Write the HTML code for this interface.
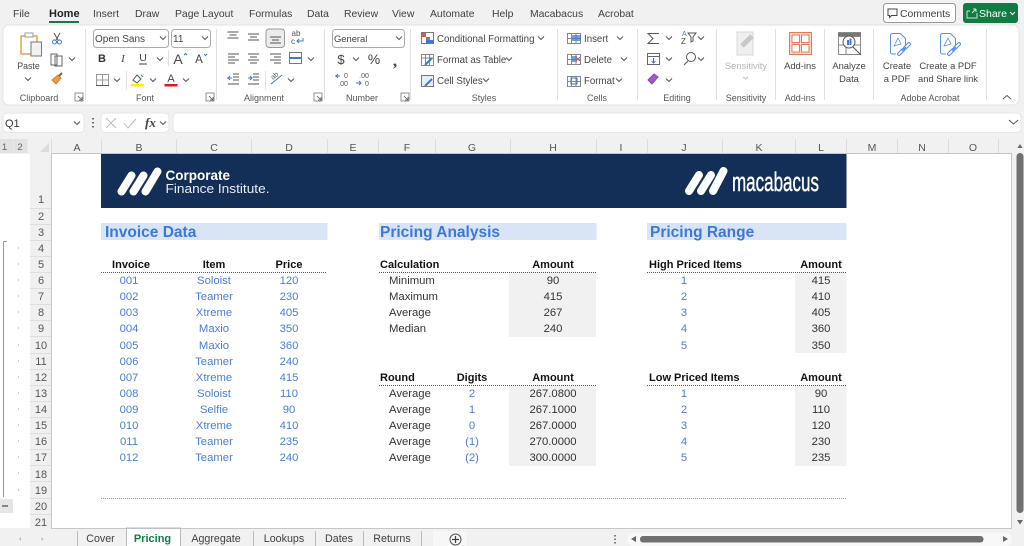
<!DOCTYPE html>
<html><head><meta charset="utf-8"><style>
html,body{margin:0;padding:0;width:1024px;height:546px;overflow:hidden;background:#f1f1f1}
svg{display:block;font-family:"Liberation Sans",sans-serif}
.m{font-size:10.4px;fill:#3f3f3f}
.tb{font-size:10.7px;fill:#3f3f3f}
.u{font-size:9.7px;fill:#444}
.b{font-size:9.4px;fill:#444}
.l{font-size:9px;fill:#555}
.c{font-size:10.5px;fill:#555}
.r{font-size:11px;fill:#555}
.h{font-size:11px;font-weight:bold;fill:#111}
.d{font-size:11.3px;fill:#4a7dd6}
.k{font-size:11.3px;fill:#333}
.t{font-size:15.500px;font-weight:bold;fill:#3b78d9}
</style></head><body>
<svg width="1024" height="546" viewBox="0 0 1024 546" xmlns="http://www.w3.org/2000/svg">
<defs>
<path id="cv" d="M-3-1.500L0 1.500L3-1.500" fill="none" stroke="#555" stroke-width="1"/>
<g id="la"><rect x="-4" y="-4" width="8" height="8" fill="none" stroke="#777" stroke-width=".8"/><path d="M-1-1L3 3M0 3H3V0" fill="none" stroke="#555" stroke-width=".8"/></g>
</defs>
<!-- top menu -->
<g class="m">
<text x="13" y="17">File</text><text x="49" y="17" font-weight="bold" style="fill:#222;font-size:11px">Home</text><text x="93" y="17">Insert</text><text x="135" y="17">Draw</text><text x="175" y="17">Page Layout</text><text x="249" y="17">Formulas</text><text x="307" y="17">Data</text><text x="344" y="17">Review</text><text x="392" y="17">View</text><text x="430" y="17">Automate</text><text x="492" y="17">Help</text><text x="530" y="17">Macabacus</text><text x="598" y="17">Acrobat</text>
</g>
<rect x="49" y="21" width="30" height="2" fill="#107c41"/>
<!-- comments / share -->
<rect x="883.500" y="3.500" width="72" height="19" rx="3" fill="#fff" stroke="#999"/>
<path d="M888 9h9v6.500h-5.500l-2 2v-2h-1.500z" fill="none" stroke="#444"/>
<text x="900" y="17" class="m">Comments</text>
<rect x="963" y="3" width="55" height="20" rx="3" fill="#107c41"/>
<path d="M967 11h3M967 11v7h10v-5M972 13l4-4m0 0h-3m3 0v3" fill="none" stroke="#cfe6d8"/>
<text x="979" y="17" font-size="10.500" fill="#fff">Share</text>
<path d="M1010 12l2.500 2.500l2.500-2.500" fill="none" stroke="#fff"/>
<!-- ribbon -->
<rect x="3" y="25" width="1016" height="80" rx="6" fill="#fff" stroke="#e3e3e3"/>
<g stroke="#e1e1e1"><path d="M85.500 29v71M216.500 29v71M324.500 29v71M410.500 29v71M557.500 29v71M637.500 29v71M716.500 29v71M775.500 29v71M824.500 29v71M873.500 29v71M986.500 29v71"/><path d="M168.500 50v16M126.500 71v19M265.500 71v19"/></g>
<!-- clipboard -->
<path d="M21 36h16v18H21z" fill="#fff" stroke="#e8a33d" stroke-width="1.500"/>
<rect x="25" y="33" width="8" height="4" fill="#fff" stroke="#999"/>
<rect x="31" y="42" width="10.500" height="14" fill="#f2f2f2" stroke="#777"/>
<text x="28.500" y="69" font-size="8.800" fill="#444" text-anchor="middle">Paste</text>
<use href="#cv" x="28" y="79"/>
<path d="M54 33l4 7M60 33l-4 7" stroke="#555" fill="none"/><circle cx="54.500" cy="42" r="2" fill="none" stroke="#3b78d9"/><circle cx="59.500" cy="42" r="2" fill="none" stroke="#3b78d9"/>
<path d="M51 54h6v11h-6zM55 56h7v10h-7z" fill="#fff" stroke="#666"/>
<use href="#cv" x="72" y="59"/>
<path d="M52 80l6-5l3 3l-5 6z" fill="#ee9a4d" stroke="#d9802c"/><path d="M59 76l3-3" stroke="#666" stroke-width="2"/>
<!-- font -->
<rect x="93.500" y="29.500" width="75" height="18" rx="3" fill="#fff" stroke="#aaa"/>
<text x="95" y="42" font-size="10" fill="#444">Open Sans</text><use href="#cv" x="163" y="38"/>
<rect x="171.500" y="29.500" width="39" height="18" rx="3" fill="#fff" stroke="#aaa"/>
<text x="173" y="42" font-size="10" fill="#444">11</text><use href="#cv" x="205" y="38"/>
<text x="102" y="62" font-size="11" font-weight="bold" fill="#333" text-anchor="middle">B</text>
<text x="123" y="62" font-size="11" font-style="italic" fill="#444" text-anchor="middle" font-family="Liberation Serif">I</text>
<text x="143" y="61" font-size="10.500" fill="#444" text-anchor="middle">U</text><path d="M139 64h8" stroke="#444"/>
<use href="#cv" x="160" y="59"/>
<text x="178" y="64" font-size="14" fill="#444" text-anchor="middle">A</text><path d="M184 55l1.500-1.500l1.500 1.500" fill="none" stroke="#3b78d9"/>
<text x="199" y="63" font-size="11.500" fill="#444" text-anchor="middle">A</text><path d="M204 54l1.500 1.500l1.500-1.500" fill="none" stroke="#3b78d9"/>
<path d="M96.500 74.500h12v11h-12zM102.500 74.500v11M96.500 80h12" fill="none" stroke="#999"/><path d="M96 85.500h13" stroke="#555"/>
<use href="#cv" x="117" y="80"/>
<path d="M133 80l4-5l4 4l-4 4z" fill="#fff" stroke="#555"/><path d="M141 75l2 2" stroke="#3b78d9"/><rect x="131" y="84" width="13" height="2.500" fill="#ffee00"/>
<use href="#cv" x="153" y="80"/>
<text x="171" y="82" font-size="11" fill="#444" text-anchor="middle">A</text><rect x="164.500" y="84" width="13" height="2.500" fill="#e8141c"/>
<use href="#cv" x="186" y="80"/>
<!-- alignment -->
<rect x="266" y="29" width="18.500" height="18.500" rx="3" fill="#ececec" stroke="#999"/>
<g stroke="#555" fill="none">
<path d="M227.500 32h11M229.500 35h7M227.500 38h11"/>
<path d="M248 34h11M250 37h7M248 40h11"/>
<path d="M270 37h11M272 40h7M270 43h11"/>
<path d="M228 54h11M228 57h7M228 60h11M228 63h7"/>
<path d="M248 54h11M250 57h7M248 60h11M250 63h7"/>
<path d="M270 54h11M274 57h7M270 60h11M274 63h7"/>
<path d="M233 74h6M233 77h6M233 80h6M228 84h11"/>
<path d="M253 74h6M253 77h6M253 80h6M248 84h11"/>
</g>
<path d="M227 78h5m-2-2l-2 2l2 2" fill="none" stroke="#3b78d9"/><path d="M248 78h4m-2-2l2 2l-2 2" fill="none" stroke="#3b78d9"/>
<text x="296" y="36" font-size="8" fill="#555" text-anchor="middle">ab</text><text x="293" y="44" font-size="8" fill="#555" text-anchor="middle">c</text><path d="M303 38v3h-6m2-2l-2 2l2 2" fill="none" stroke="#3b78d9"/>
<rect x="289.500" y="52.500" width="12" height="11" fill="#fff" stroke="#777"/><path d="M290 58h11" stroke="#3b78d9" stroke-width="2"/>
<use href="#cv" x="311" y="59"/>
<path d="M271 84l11-9" stroke="#3b78d9"/><text x="273" y="80" font-size="7" fill="#555" transform="rotate(-40 273 80)">ab</text>
<use href="#cv" x="291" y="80"/>
<use href="#la" x="79" y="97"/><use href="#la" x="210" y="97"/><use href="#la" x="318" y="97"/><use href="#la" x="405" y="97"/>
<!-- number -->
<rect x="332.500" y="29.500" width="72" height="18" rx="3" fill="#fff" stroke="#aaa"/>
<text x="334" y="42" font-size="9.400" fill="#444">General</text><use href="#cv" x="399" y="38"/>
<text x="341" y="64" font-size="13" fill="#444" text-anchor="middle">$</text><use href="#cv" x="356" y="59"/>
<text x="374" y="64" font-size="14" fill="#444" text-anchor="middle">%</text>
<text x="395" y="66" font-size="17" font-weight="bold" fill="#444" text-anchor="middle" font-family="Liberation Serif">,</text>
<text x="346" y="78" font-size="7" fill="#555" text-anchor="middle">0</text><text x="343" y="86" font-size="7" fill="#555" text-anchor="middle">.00</text><path d="M335 76h5m-2-2l-2 2l2 2" fill="none" stroke="#3b78d9"/>
<text x="364" y="78" font-size="7" fill="#555" text-anchor="middle">.00</text><text x="367" y="86" font-size="7" fill="#555" text-anchor="middle">0</text><path d="M356 83h5m-2-2l2 2l-2 2" fill="none" stroke="#3b78d9"/>
<!-- styles -->
<rect x="421.500" y="32.500" width="12" height="11" fill="#fff" stroke="#777"/><rect x="422" y="33" width="4" height="4" fill="#e0564a"/><rect x="426" y="37" width="4" height="3" fill="#e0564a"/><rect x="426" y="40" width="7" height="3" fill="#3b78d9"/>
<path d="M421.500 54.500h12v11h-12zM421.500 58h12M425.500 54.500v11M429.500 54.500v11" fill="none" stroke="#888"/><path d="M425 65l7-7" stroke="#3b78d9" stroke-width="2"/>
<rect x="421.500" y="75.500" width="12" height="11" fill="#e8eef8" stroke="#777"/><path d="M425 86l7-7" stroke="#3b78d9" stroke-width="2"/>
<g class="u"><text x="437" y="42">Conditional Formatting</text><text x="437" y="63">Format as Table</text><text x="437" y="84">Cell Styles</text></g>
<use href="#cv" x="541" y="38"/><use href="#cv" x="509" y="59"/><use href="#cv" x="486" y="80"/>
<!-- cells -->
<path d="M567.500 33.500h13v10h-13zM567.500 38.500h13M571.500 33.500v10M576 33.500v10" fill="none" stroke="#888"/><rect x="572" y="35" width="9" height="6" fill="#3b78d9" opacity=".7"/>
<path d="M567.500 54.500h13v10h-13zM567.500 59.500h13M571.500 54.500v10M576 54.500v10" fill="none" stroke="#888"/><rect x="572" y="56" width="5" height="6" fill="#3b78d9" opacity=".7"/><path d="M576 57l4 4m0-4l-4 4" stroke="#e0564a"/>
<path d="M567.500 76.500h13v10h-13zM567.500 81.500h13M571.500 76.500v10M576 76.500v10" fill="none" stroke="#888"/><rect x="571" y="78" width="6" height="6" fill="none" stroke="#3b78d9"/>
<g class="u"><text x="584" y="42">Insert</text><text x="584" y="63">Delete</text><text x="584" y="84">Format</text></g>
<use href="#cv" x="620" y="38"/><use href="#cv" x="624" y="59"/><use href="#cv" x="619" y="80"/>
<!-- editing -->
<path d="M659 33.500h-11l5 5l-5 5h11" fill="none" stroke="#555" stroke-width="1"/><use href="#cv" x="669" y="38"/>
<rect x="647.500" y="53.500" width="12" height="11" fill="#fff" stroke="#666"/><path d="M647 56.500h12" stroke="#666"/><path d="M653.500 58v5m-2-2l2 2l2-2" fill="none" stroke="#3b78d9"/><use href="#cv" x="669" y="59"/>
<path d="M648 80l6-6l4 3l-6 7z" fill="#a45ac8" stroke="#8a45ad"/><use href="#cv" x="669" y="80"/>
<text x="682" y="36" font-size="7" fill="#3b78d9">A</text><text x="681" y="44" font-size="8" fill="#444">Z</text>
<path d="M688 33h8l-3 4v4l-2 1v-5z" fill="none" stroke="#555"/><use href="#cv" x="701" y="38"/>
<circle cx="691" cy="57" r="4.500" fill="none" stroke="#555"/><path d="M688 61l-4 4" stroke="#555"/><use href="#cv" x="701" y="59"/>
<!-- sensitivity -->
<rect x="737" y="32" width="16" height="23" fill="#efefef" stroke="#d8d8d8"/><path d="M742 46l10-10" stroke="#c8c8c8" stroke-width="5"/>
<text x="746" y="69" class="b" text-anchor="middle" style="fill:#b5b5b5">Sensitivity</text>
<path d="M743 77l2.500 2l2.500-2" fill="none" stroke="#bbb"/>
<!-- add-ins -->
<rect x="789.500" y="32.500" width="22" height="22" fill="#f9d9cc" stroke="#e07b54"/>
<g fill="#fff" stroke="#e07b54"><rect x="792" y="35" width="7.500" height="7.500"/><rect x="801.500" y="35" width="7.500" height="7.500"/><rect x="792" y="44.500" width="7.500" height="7.500"/><rect x="801.500" y="44.500" width="7.500" height="7.500"/></g>
<text x="800" y="69" class="b" text-anchor="middle">Add-ins</text>
<!-- analyze -->
<path d="M838.500 32.500h22v22h-22zM838.500 36.500h22M838.500 45h22M846 36v19" fill="none" stroke="#888"/><path d="M838 33h23v3h-23z" fill="#777"/>
<circle cx="849" cy="42" r="6" fill="#fff" stroke="#555"/><rect x="847" y="40" width="2" height="5" fill="#3b78d9"/><rect x="849.500" y="38.500" width="2" height="6.500" fill="#3b78d9"/><path d="M853 47l8 8" stroke="#555"/>
<text x="849" y="69" class="b" text-anchor="middle">Analyze</text><text x="849" y="82" class="b" text-anchor="middle">Data</text>
<!-- pdf -->
<g fill="none" stroke="#5a8fe8"><path d="M896 54h-3.500a2 2 0 0 1-2-2V36a2.500 2.500 0 0 1 2-2.500h8l5 5v8"/><path d="M894 46l4-8l3 6l-7 2z" stroke-width=".8"/><path d="M899 54l4-4M905 48l4-4" stroke-width="4" stroke-linecap="round"/><path d="M899 54l4-4M905 48l4-4" stroke="#fff" stroke-width="1.800" stroke-linecap="round"/><path d="M902 51l4-4" stroke-width="1.500"/></g>
<g fill="none" stroke="#5a8fe8" transform="translate(50 0)"><path d="M896 54h-3.500a2 2 0 0 1-2-2V36a2.500 2.500 0 0 1 2-2.500h8l5 5v8"/><path d="M894 46l4-8l3 6l-7 2z" stroke-width=".8"/><path d="M899 54l4-4M905 48l4-4" stroke-width="4" stroke-linecap="round"/><path d="M899 54l4-4M905 48l4-4" stroke="#fff" stroke-width="1.800" stroke-linecap="round"/><path d="M902 51l4-4" stroke-width="1.500"/></g>
<g class="b" text-anchor="middle"><text x="897" y="69">Create</text><text x="897" y="82">a PDF</text><text x="948" y="69">Create a PDF</text><text x="948" y="82" textLength="60" lengthAdjust="spacingAndGlyphs">and Share link</text></g>
<path d="M1003 99l4-3.500l4 3.500" fill="none" stroke="#555"/>
<!-- group labels -->
<g class="l" text-anchor="middle"><text x="39" y="101">Clipboard</text><text x="145" y="101">Font</text><text x="264" y="101">Alignment</text><text x="362" y="101">Number</text><text x="484" y="101">Styles</text><text x="597" y="101">Cells</text><text x="677" y="101">Editing</text><text x="746" y="101">Sensitivity</text><text x="800" y="101">Add-ins</text><text x="930" y="101">Adobe Acrobat</text></g>
<!-- formula bar -->
<rect x="3" y="113" width="81" height="19.500" rx="4" fill="#fff" stroke="#e6e6e6"/>
<text x="5" y="127" font-size="11" fill="#333">Q1</text><use href="#cv" x="77" y="123"/>
<path d="M93 118v1.500M93 122v1.500M93 126v1.500" stroke="#444" stroke-width="1.500"/>
<rect x="101" y="113" width="68" height="19.500" rx="4" fill="#fff" stroke="#e6e6e6"/>
<path d="M106 118l10 10m0-10l-10 10" stroke="#bbb" fill="none"/><path d="M124 123l4 5l8-9" stroke="#bbb" fill="none"/>
<text x="145" y="127" font-size="13" font-style="italic" font-weight="bold" font-family="Liberation Serif" fill="#444">fx</text><use href="#cv" x="163" y="123"/>
<rect x="173" y="113" width="848" height="19.500" rx="4" fill="#fff" stroke="#e6e6e6"/>
<path d="M1009 120l4.500 4l4.500-4" fill="none" stroke="#555"/>
<!-- outline level buttons -->
<rect x="0" y="139" width="13" height="14" fill="#e2e2e2"/><rect x="13.500" y="139" width="14" height="14" fill="#e2e2e2"/>
<text x="4.500" y="150" font-size="9.500" fill="#666" text-anchor="middle">1</text><text x="20" y="150" font-size="9.500" fill="#666" text-anchor="middle">2</text>
<path d="M49 143v9h-9z" fill="#dcdcdc"/>
<!-- col headers -->
<path d="M51.500 139v14M101.500 139v14M176.500 139v14M251.500 139v14M327.500 139v14M378.500 139v14M435.500 139v14M510.500 139v14M596.500 139v14M647.500 139v14M722.500 139v14M795.500 139v14M846.500 139v14M897.500 139v14M948.500 139v14M998.500 139v14" stroke="#dcdcdc"/>
<g class="c" text-anchor="middle"><text x="77" y="151">A</text><text x="139" y="151">B</text><text x="214" y="151">C</text><text x="289" y="151">D</text><text x="353" y="151">E</text><text x="407" y="151">F</text><text x="472" y="151">G</text><text x="553" y="151">H</text><text x="621" y="151">I</text><text x="684" y="151">J</text><text x="759" y="151">K</text><text x="821" y="151">L</text><text x="872" y="151">M</text><text x="922" y="151">N</text><text x="973" y="151">O</text></g>
<!-- left gutter + sheet -->
<rect x="0" y="154" width="30" height="374" fill="#fff"/>
<rect x="30" y="154" width="21" height="374" fill="#f0f0f0"/>
<rect x="51.500" y="153.500" width="960" height="375" fill="#fff" stroke="#c6c6c6"/>
<path d="M30 208.500h21M30 224.500h21M30 240.500h21M30 256.500h21M30 272.500h21M30 288.500h21M30 304.500h21M30 320.500h21M30 336.500h21M30 353.500h21M30 369.500h21M30 385.500h21M30 401.500h21M30 417.500h21M30 433.500h21M30 449.500h21M30 465.500h21M30 481.500h21M30 498.500h21M30 514.500h21" stroke="#dedede"/>
<g class="r" text-anchor="middle"><text x="41" y="203">1</text><text x="41" y="220">2</text><text x="41" y="236">3</text><text x="41" y="252">4</text><text x="41" y="268">5</text><text x="41" y="284">6</text><text x="41" y="300">7</text><text x="41" y="316">8</text><text x="41" y="332">9</text><text x="41" y="349">10</text><text x="41" y="365">11</text><text x="41" y="381">12</text><text x="41" y="397">13</text><text x="41" y="413">14</text><text x="41" y="429">15</text><text x="41" y="445">16</text><text x="41" y="461">17</text><text x="41" y="478">18</text><text x="41" y="494">19</text><text x="41" y="510">20</text><text x="41" y="526">21</text></g>
<!-- outline -->
<path d="M7 241.500H3.500V497" fill="none" stroke="#999"/>
<path d="M18 248h1M18 264h1M18 280h1M18 296h1M18 312h1M18 328h1M18 345h1M18 361h1M18 377h1M18 393h1M18 409h1M18 425h1M18 441h1M18 457h1M18 473h1M18 490h1" stroke="#999"/>
<rect x="0" y="499" width="13" height="14" fill="#e6e6e6"/><path d="M2 506h6" stroke="#444" stroke-width="1.200"/>
<!-- banner -->
<rect x="101" y="154" width="745.500" height="54" fill="#142f57"/>
<g stroke="#fff" stroke-width="8" stroke-linecap="round"><path d="M121.500 191.500L131.500 175.500M133.500 191.500L143.500 175.500M145.500 191.500L157.500 171.500"/><path d="M689 191L699 175M701 191L711 175M713 191L723.500 171"/></g>
<text x="165.500" y="180" font-size="13.500" font-weight="bold" fill="#fff">Corporate</text>
<text x="165.500" y="193" font-size="12.500" fill="#e8edf4" textLength="104" lengthAdjust="spacingAndGlyphs">Finance Institute.</text>
<text x="732" y="191" font-size="27" fill="#fff" stroke="#fff" stroke-width=".4" textLength="87" lengthAdjust="spacingAndGlyphs">macabacus</text>
<!-- title bands -->
<g fill="#d9e4f6"><rect x="101" y="223" width="226.500" height="17"/><rect x="379" y="223" width="217.500" height="17"/><rect x="647" y="223" width="199.500" height="17"/></g>
<g class="t"><text x="105" y="237">Invoice Data</text><text x="380" y="237">Pricing Analysis</text><text x="650" y="237">Pricing Range</text></g>
<!-- grey cells -->
<g fill="#f1f1f1"><rect x="509" y="272" width="87" height="65"/><rect x="509" y="385" width="87" height="81"/><rect x="795" y="272" width="51.500" height="81"/><rect x="795" y="385" width="51.500" height="81"/></g>
<!-- dotted lines -->
<g stroke="#555" stroke-dasharray="1 1" fill="none"><path d="M101 272.500h226M379 272.500h217M647 272.500h199M379 385.500h217M647 385.500h199"/></g>
<path d="M101 498.500h745" stroke="#999" stroke-dasharray="1 1"/>
<!-- invoice -->
<g class="h" text-anchor="middle"><text x="131" y="268">Invoice</text><text x="214" y="268">Item</text><text x="289" y="268">Price</text><text x="553" y="268">Amount</text><text x="821" y="268">Amount</text><text x="472" y="381">Digits</text><text x="553" y="381">Amount</text><text x="821" y="381">Amount</text></g>
<g class="h"><text x="380" y="268">Calculation</text><text x="649" y="268">High Priced Items</text><text x="380" y="381">Round</text><text x="649" y="381">Low Priced Items</text></g>
<g class="d" text-anchor="middle">
<text x="129" y="284">001</text><text x="129" y="300">002</text><text x="129" y="316">003</text><text x="129" y="332">004</text><text x="129" y="349">005</text><text x="129" y="365">006</text><text x="129" y="381">007</text><text x="129" y="397">008</text><text x="129" y="413">009</text><text x="129" y="429">010</text><text x="129" y="445">011</text><text x="129" y="461">012</text>
<text x="214" y="284">Soloist</text><text x="214" y="300">Teamer</text><text x="214" y="316">Xtreme</text><text x="214" y="332">Maxio</text><text x="214" y="349">Maxio</text><text x="214" y="365">Teamer</text><text x="214" y="381">Xtreme</text><text x="214" y="397">Soloist</text><text x="214" y="413">Selfie</text><text x="214" y="429">Xtreme</text><text x="214" y="445">Teamer</text><text x="214" y="461">Teamer</text>
<text x="289" y="284">120</text><text x="289" y="300">230</text><text x="289" y="316">405</text><text x="289" y="332">350</text><text x="289" y="349">360</text><text x="289" y="365">240</text><text x="289" y="381">415</text><text x="289" y="397">110</text><text x="289" y="413">90</text><text x="289" y="429">410</text><text x="289" y="445">235</text><text x="289" y="461">240</text>
<text x="472" y="397">2</text><text x="472" y="413">1</text><text x="472" y="429">0</text><text x="472" y="445">(1)</text><text x="472" y="461">(2)</text>
<text x="684" y="284">1</text><text x="684" y="300">2</text><text x="684" y="316">3</text><text x="684" y="332">4</text><text x="684" y="349">5</text>
<text x="684" y="397">1</text><text x="684" y="413">2</text><text x="684" y="429">3</text><text x="684" y="445">4</text><text x="684" y="461">5</text>
</g>
<g class="k">
<text x="389" y="284">Minimum</text><text x="389" y="300">Maximum</text><text x="389" y="316">Average</text><text x="389" y="332">Median</text>
<text x="389" y="397">Average</text><text x="389" y="413">Average</text><text x="389" y="429">Average</text><text x="389" y="445">Average</text><text x="389" y="461">Average</text>
</g>
<g class="k" text-anchor="middle">
<text x="553" y="284">90</text><text x="553" y="300">415</text><text x="553" y="316">267</text><text x="553" y="332">240</text>
<text x="553" y="397">267.0800</text><text x="553" y="413">267.1000</text><text x="553" y="429">267.0000</text><text x="553" y="445">270.0000</text><text x="553" y="461">300.0000</text>
<text x="821" y="284">415</text><text x="821" y="300">410</text><text x="821" y="316">405</text><text x="821" y="332">360</text><text x="821" y="349">350</text>
<text x="821" y="397">90</text><text x="821" y="413">110</text><text x="821" y="429">120</text><text x="821" y="445">230</text><text x="821" y="461">235</text>
</g>
<!-- vertical scrollbar -->
<path d="M1017.500 148l2.500-4l2.500 4z" fill="#666"/>
<rect x="1016.500" y="153" width="7" height="360" rx="3.500" fill="#707070"/>
<path d="M1017 520l3 4.500l3-4.500z" fill="#666"/>
<!-- tabs -->
<rect x="0" y="529" width="1024" height="17" fill="#f1f1f1"/>
<path d="M21 537l-2 2l2 2zM41.500 537l2 2l-2 2z" fill="#bbb"/>
<path d="M126 529h55v17h-55z" fill="#fff"/>
<path d="M126.500 546v-18h54v18" fill="none" stroke="#bbb"/>
<path d="M77.500 531v15M253.500 531v15M315.500 531v15M363.500 531v15M421.500 531v15" stroke="#bbb"/>
<g class="tb" text-anchor="middle"><text x="100.500" y="542">Cover</text><text x="216" y="542">Aggregate</text><text x="284" y="542">Lookups</text><text x="339" y="542">Dates</text><text x="392" y="542">Returns</text></g>
<text x="152.500" y="542" font-size="11" font-weight="bold" fill="#107c41" text-anchor="middle">Pricing</text>
<rect x="433" y="531" width="34" height="15" fill="#f7f7f7"/>
<circle cx="455.500" cy="539.500" r="5.500" fill="none" stroke="#555"/><path d="M452 539.500h7M455.500 536v7" stroke="#444" stroke-width="1.200"/>
<!-- h scrollbar -->
<path d="M615 535v1.500M615 538.500v1.500M615 542v1.500" stroke="#555" stroke-width="1.500"/>
<rect x="627" y="533" width="385" height="13" rx="6" fill="#f8f8f8"/>
<path d="M636 536l-5 3l5 3zM1003 536l5 3l-5 3z" fill="#666"/>
<rect x="640" y="536" width="343.500" height="6.500" rx="3" fill="#707070"/>
</svg>
</body></html>
